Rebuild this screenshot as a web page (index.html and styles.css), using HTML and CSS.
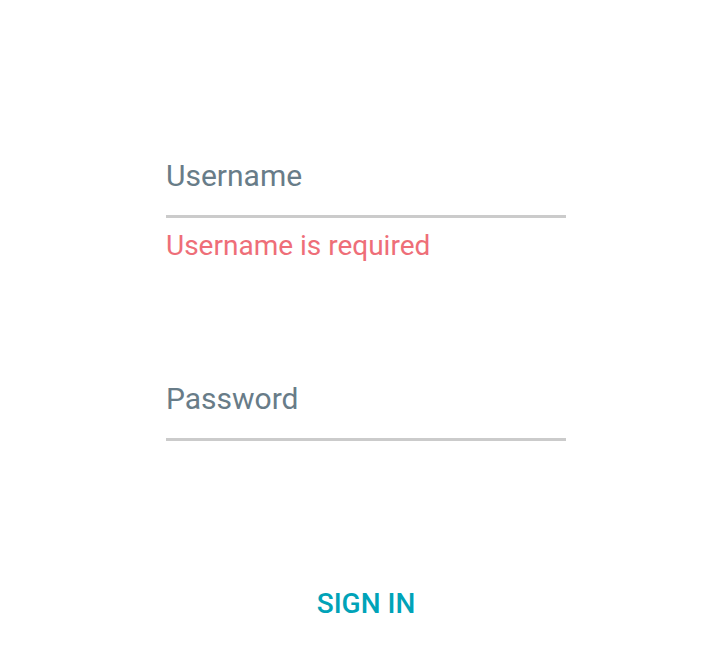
FILE: index.html
```html
<!DOCTYPE html>
<html>
<head>
<meta charset="utf-8">
<link rel="stylesheet" href="styles.css">
</head>
<body>
<form class="form">
  <div class="field field-user">
    <div class="label">Username</div>
    <div class="underline"></div>
    <div class="error">Username is required</div>
  </div>
  <div class="field field-pass">
    <div class="label">Password</div>
    <div class="underline"></div>
  </div>
  <button type="button" class="signin">SIGN IN</button>
</form>
</body>
</html>
```
FILE: styles.css
```css
html, body {
  background: #ffffff;
}
body {
  margin: 0 0 0 8px;
  font-family: Roboto, "Liberation Sans", sans-serif;
}
.form {
  display: flex;
  flex-direction: column;
  align-items: center;
  padding-top: 158px;
}
.field {
  width: 400px;
  display: flex;
  flex-direction: column;
}
.field-pass {
  margin-top: 118px;
}
.label {
  font-size: 30px;
  line-height: 36px;
  color: #687c88;
  margin-bottom: 21px;
}
.underline {
  height: 3px;
  background: #cbcbcb;
}
.error {
  margin-top: 11px;
  font-size: 28px;
  line-height: 34px;
  color: #ee6e78;
}
.signin {
  margin-top: 146px;
  border: none;
  background: none;
  padding: 0;
  font-family: Roboto, "Liberation Sans", sans-serif;
  font-size: 28px;
  line-height: 34px;
  font-weight: 500;
  color: #00a3b8;
  cursor: pointer;
}
```
